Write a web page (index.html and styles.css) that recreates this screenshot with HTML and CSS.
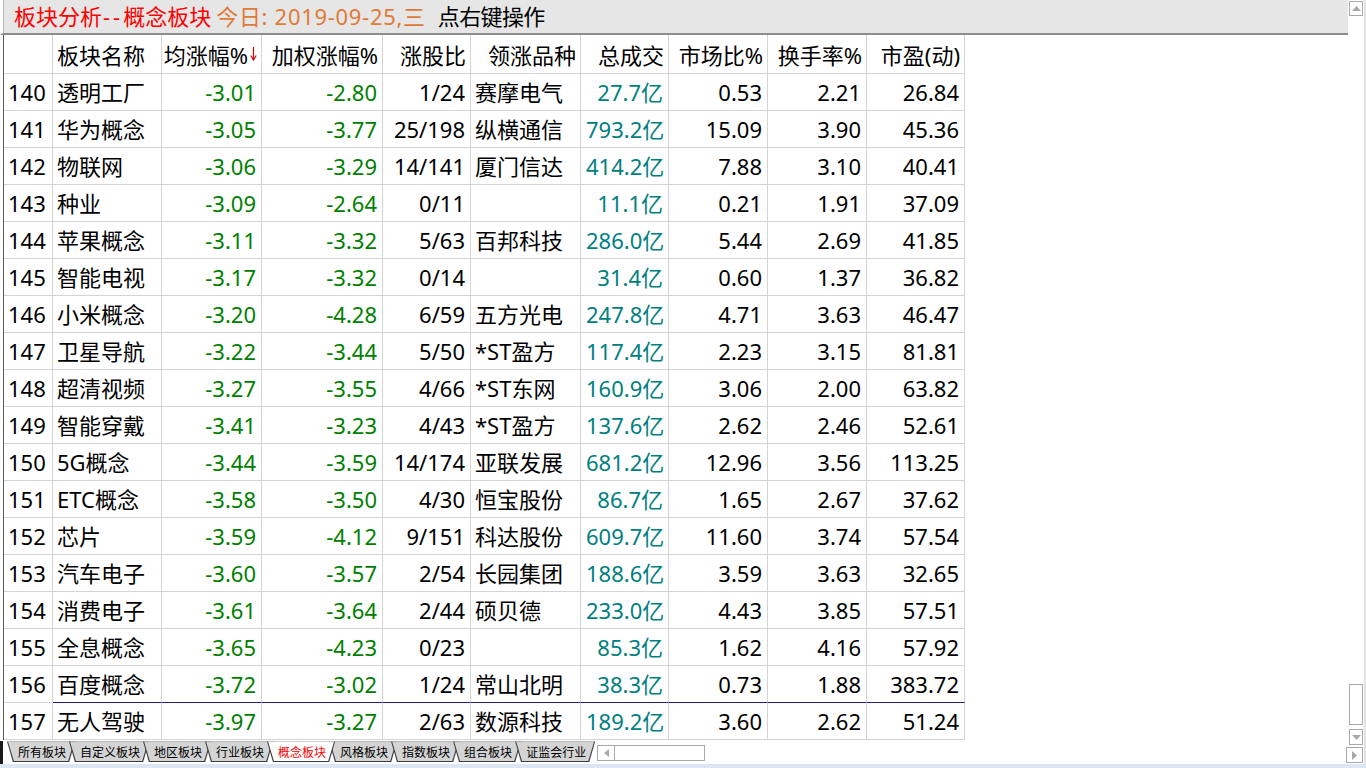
FILE: index.html
```html
<!DOCTYPE html>
<html lang="zh-CN">
<head>
<meta charset="utf-8">
<title>板块分析--概念板块</title>
<link rel="stylesheet" href="styles.css">
</head>
<body>
<div class="app">
  <div class="body">
    <div class="main">
      <div class="title">
        <span class="t-red">板块分析<span class="dash">--</span>概念板块</span>
        <span class="t-orange">今日: 2019-09-25,三</span>
        <span class="t-black">点右键操作</span>
      </div>
      <div class="grid">
        <div class="row head">
          <div class="c"></div>
          <div class="c l">板块名称</div>
          <div class="c">均涨幅%<svg class="sort" width="7" height="15" viewBox="0 0 7 15"><path d="M3.5 1V13" stroke="#e00000" stroke-width="1.2"/><path d="M0.8 9.5L3.5 14L6.2 9.5" fill="none" stroke="#e00000" stroke-width="1.2"/></svg></div>
          <div class="c">加权涨幅%</div>
          <div class="c">涨股比</div>
          <div class="c">领涨品种</div>
          <div class="c">总成交</div>
          <div class="c">市场比%</div>
          <div class="c">换手率%</div>
          <div class="c">市盈(动)</div>
        </div>
        <div class="row"><div class="c n">140</div><div class="c l">透明工厂</div><div class="c g">-3.01</div><div class="c g">-2.80</div><div class="c">1/24</div><div class="c l">赛摩电气</div><div class="c t">27.7亿</div><div class="c">0.53</div><div class="c">2.21</div><div class="c">26.84</div></div>
        <div class="row"><div class="c n">141</div><div class="c l">华为概念</div><div class="c g">-3.05</div><div class="c g">-3.77</div><div class="c">25/198</div><div class="c l">纵横通信</div><div class="c t">793.2亿</div><div class="c">15.09</div><div class="c">3.90</div><div class="c">45.36</div></div>
        <div class="row"><div class="c n">142</div><div class="c l">物联网</div><div class="c g">-3.06</div><div class="c g">-3.29</div><div class="c">14/141</div><div class="c l">厦门信达</div><div class="c t">414.2亿</div><div class="c">7.88</div><div class="c">3.10</div><div class="c">40.41</div></div>
        <div class="row"><div class="c n">143</div><div class="c l">种业</div><div class="c g">-3.09</div><div class="c g">-2.64</div><div class="c">0/11</div><div class="c l"></div><div class="c t">11.1亿</div><div class="c">0.21</div><div class="c">1.91</div><div class="c">37.09</div></div>
        <div class="row"><div class="c n">144</div><div class="c l">苹果概念</div><div class="c g">-3.11</div><div class="c g">-3.32</div><div class="c">5/63</div><div class="c l">百邦科技</div><div class="c t">286.0亿</div><div class="c">5.44</div><div class="c">2.69</div><div class="c">41.85</div></div>
        <div class="row"><div class="c n">145</div><div class="c l">智能电视</div><div class="c g">-3.17</div><div class="c g">-3.32</div><div class="c">0/14</div><div class="c l"></div><div class="c t">31.4亿</div><div class="c">0.60</div><div class="c">1.37</div><div class="c">36.82</div></div>
        <div class="row"><div class="c n">146</div><div class="c l">小米概念</div><div class="c g">-3.20</div><div class="c g">-4.28</div><div class="c">6/59</div><div class="c l">五方光电</div><div class="c t">247.8亿</div><div class="c">4.71</div><div class="c">3.63</div><div class="c">46.47</div></div>
        <div class="row"><div class="c n">147</div><div class="c l">卫星导航</div><div class="c g">-3.22</div><div class="c g">-3.44</div><div class="c">5/50</div><div class="c l">*ST盈方</div><div class="c t">117.4亿</div><div class="c">2.23</div><div class="c">3.15</div><div class="c">81.81</div></div>
        <div class="row"><div class="c n">148</div><div class="c l">超清视频</div><div class="c g">-3.27</div><div class="c g">-3.55</div><div class="c">4/66</div><div class="c l">*ST东网</div><div class="c t">160.9亿</div><div class="c">3.06</div><div class="c">2.00</div><div class="c">63.82</div></div>
        <div class="row"><div class="c n">149</div><div class="c l">智能穿戴</div><div class="c g">-3.41</div><div class="c g">-3.23</div><div class="c">4/43</div><div class="c l">*ST盈方</div><div class="c t">137.6亿</div><div class="c">2.62</div><div class="c">2.46</div><div class="c">52.61</div></div>
        <div class="row"><div class="c n">150</div><div class="c l">5G概念</div><div class="c g">-3.44</div><div class="c g">-3.59</div><div class="c">14/174</div><div class="c l">亚联发展</div><div class="c t">681.2亿</div><div class="c">12.96</div><div class="c">3.56</div><div class="c">113.25</div></div>
        <div class="row"><div class="c n">151</div><div class="c l">ETC概念</div><div class="c g">-3.58</div><div class="c g">-3.50</div><div class="c">4/30</div><div class="c l">恒宝股份</div><div class="c t">86.7亿</div><div class="c">1.65</div><div class="c">2.67</div><div class="c">37.62</div></div>
        <div class="row"><div class="c n">152</div><div class="c l">芯片</div><div class="c g">-3.59</div><div class="c g">-4.12</div><div class="c">9/151</div><div class="c l">科达股份</div><div class="c t">609.7亿</div><div class="c">11.60</div><div class="c">3.74</div><div class="c">57.54</div></div>
        <div class="row"><div class="c n">153</div><div class="c l">汽车电子</div><div class="c g">-3.60</div><div class="c g">-3.57</div><div class="c">2/54</div><div class="c l">长园集团</div><div class="c t">188.6亿</div><div class="c">3.59</div><div class="c">3.63</div><div class="c">32.65</div></div>
        <div class="row"><div class="c n">154</div><div class="c l">消费电子</div><div class="c g">-3.61</div><div class="c g">-3.64</div><div class="c">2/44</div><div class="c l">硕贝德</div><div class="c t">233.0亿</div><div class="c">4.43</div><div class="c">3.85</div><div class="c">57.51</div></div>
        <div class="row"><div class="c n">155</div><div class="c l">全息概念</div><div class="c g">-3.65</div><div class="c g">-4.23</div><div class="c">0/23</div><div class="c l"></div><div class="c t">85.3亿</div><div class="c">1.62</div><div class="c">4.16</div><div class="c">57.92</div></div>
        <div class="row mark"><div class="c n">156</div><div class="c l">百度概念</div><div class="c g">-3.72</div><div class="c g">-3.02</div><div class="c">1/24</div><div class="c l">常山北明</div><div class="c t">38.3亿</div><div class="c">0.73</div><div class="c">1.88</div><div class="c">383.72</div></div>
        <div class="row"><div class="c n">157</div><div class="c l">无人驾驶</div><div class="c g">-3.97</div><div class="c g">-3.27</div><div class="c">2/63</div><div class="c l">数源科技</div><div class="c t">189.2亿</div><div class="c">3.60</div><div class="c">2.62</div><div class="c">51.24</div></div>
      </div>
      <div class="tabbar">
        <div class="tabs">
          <span class="tab">所有板块</span>
          <span class="tab">自定义板块</span>
          <span class="tab">地区板块</span>
          <span class="tab">行业板块</span>
          <span class="tab active">概念板块</span>
          <span class="tab">风格板块</span>
          <span class="tab">指数板块</span>
          <span class="tab">组合板块</span>
          <span class="tab last">证监会行业</span>
        </div>
        <div class="hscroll">
          <span class="sbtn"><svg width="5" height="8" viewBox="0 0 5 8"><path d="M5 0V8L0 4Z" fill="#a8a8a8"/></svg></span>
        </div>
      </div>
    </div>
    <div class="vbar">
      <span class="vbtn up"><svg width="9" height="5" viewBox="0 0 9 5"><path d="M0 5H9L4.5 0Z" fill="#a8a8a8"/></svg></span>
      <span class="vspace"></span>
      <span class="thumb"></span>
      <span class="vbtn down"><svg width="9" height="5" viewBox="0 0 9 5"><path d="M0 0H9L4.5 5Z" fill="#a8a8a8"/></svg></span>
      <span class="vbtn right"><svg width="5" height="9" viewBox="0 0 5 9"><path d="M0 0V9L5 4.5Z" fill="#a8a8a8"/></svg></span>
    </div>
  </div>
  <div class="strip"></div>
</div>
</body>
</html>
```

FILE: styles.css
```css
* { box-sizing: border-box; }
html, body { margin: 0; padding: 0; background: #ffffff; }
body {
  width: 1366px;
  height: 768px;
  overflow: hidden;
  font-family: "Noto Sans", "Noto Sans CJK SC", sans-serif;
  color: #000000;
}
.app { display: flex; flex-direction: column; height: 768px; }
.body { display: flex; flex: 1; min-height: 0; }
.main { flex: 1; display: flex; flex-direction: column; min-width: 0; }

.title {
  height: 36px;
  background: #e6e6e6;
  border-bottom: 2px solid #8c8c8c;
  border-left: 3px solid #ffffff;
  box-shadow: inset 1px 0 0 #b8b8b8;
  padding-left: 11px;
  font-size: 22px;
  line-height: 33px;
  white-space: nowrap;
  display: flex;
}
.t-red { color: #ff0000; }
.dash { letter-spacing: 3px; padding-left: 1px; }
.t-orange { color: #e07a36; margin-left: 5px; letter-spacing: 0.7px; }
.t-black { color: #000000; margin-left: 12px; letter-spacing: -0.6px; }

.grid {
  margin-left: 3px;
  border-left: 1px solid #5a5a5a;
  width: 963px;
  height: 705px;
}
.row {
  display: grid;
  grid-template-columns: 49px 109px 100px 121px 88px 110px 88px 99px 99px 98px;
  height: 37px;
  font-size: 22px;
  line-height: 36px;
}
.row.head { height: 39px; line-height: 40px; }
.c {
  border-right: 1px solid #d4d4d4;
  border-bottom: 1px solid #d4d4d4;
  text-align: right;
  padding: 0 5px;
  white-space: nowrap;
  overflow: hidden;
}
.head .c { padding: 0 4px 0 0; }
.head .c.l { padding-left: 4px; text-align: left; }
.c.l { text-align: left; padding-left: 4px; }
.c.n { text-align: left; padding-left: 4px; }
.c.g { color: #008000; }
.c.t { color: #008080; }
.row.mark .c:not(.n) { border-bottom-color: #1c1c8c; }
.sort { vertical-align: top; margin-top: 11px; margin-left: 2px; }

.tabbar {
  height: 23px;
  display: flex;
  align-items: flex-start;
  padding-left: 4px;
  border-left: 3px solid #1a1a1a;
  margin-top: 1px;
}
.tabs { display: flex; height: 21px; }
.tab {
  position: relative;
  z-index: 0;
  height: 21px;
  padding: 0 9px 0 11px;
  margin-left: -6px;
  font-family: "Noto Sans CJK SC", sans-serif;
  font-size: 12px;
  line-height: 21px;
  color: #000000;
}
.tab:first-child { margin-left: 0; }
.tab::before, .tab::after {
  content: "";
  position: absolute;
  z-index: -1;
  clip-path: polygon(0 0, 100% 0, calc(100% - 6px) 100%, 6px 100%);
}
.tab::before { inset: 0; background: #3c3c3c; }
.tab::after { top: 0; bottom: 1px; left: 1px; right: 1px; background: #d4d4d4; }
.tab.active { z-index: 1; color: #ff0000; }
.tab.active::after { background: #ffffff; }

.hscroll {
  margin-left: 2px;
  margin-top: 4px;
  width: 108px;
  height: 16px;
  border: 1px solid #a8a8a8;
  display: flex;
}
.sbtn {
  width: 17px;
  border-right: 1px solid #a8a8a8;
  display: flex;
  align-items: center;
  justify-content: center;
}

.vbar {
  width: 18px;
  border-right: 2px solid #e2e2e2;
  display: flex;
  flex-direction: column;
  align-items: flex-end;
  padding-right: 1px;
}
.vbtn {
  width: 14px;
  height: 15px;
  border: 1px solid #a8a8a8;
  display: flex;
  align-items: center;
  justify-content: center;
  background: #ffffff;
}
.vbtn.up { margin-top: 1px; }
.vbtn.down { height: 16px; margin-top: 4px; }
.vbtn.right { width: 17px; height: 16px; margin-top: 2px; margin-bottom: 1px; }
.vspace { flex: 1; }
.thumb {
  width: 14px;
  height: 41px;
  border: 1px solid #a8a8a8;
  background: #ffffff;
}

.strip { height: 4px; background: #dce6f4; }
```
